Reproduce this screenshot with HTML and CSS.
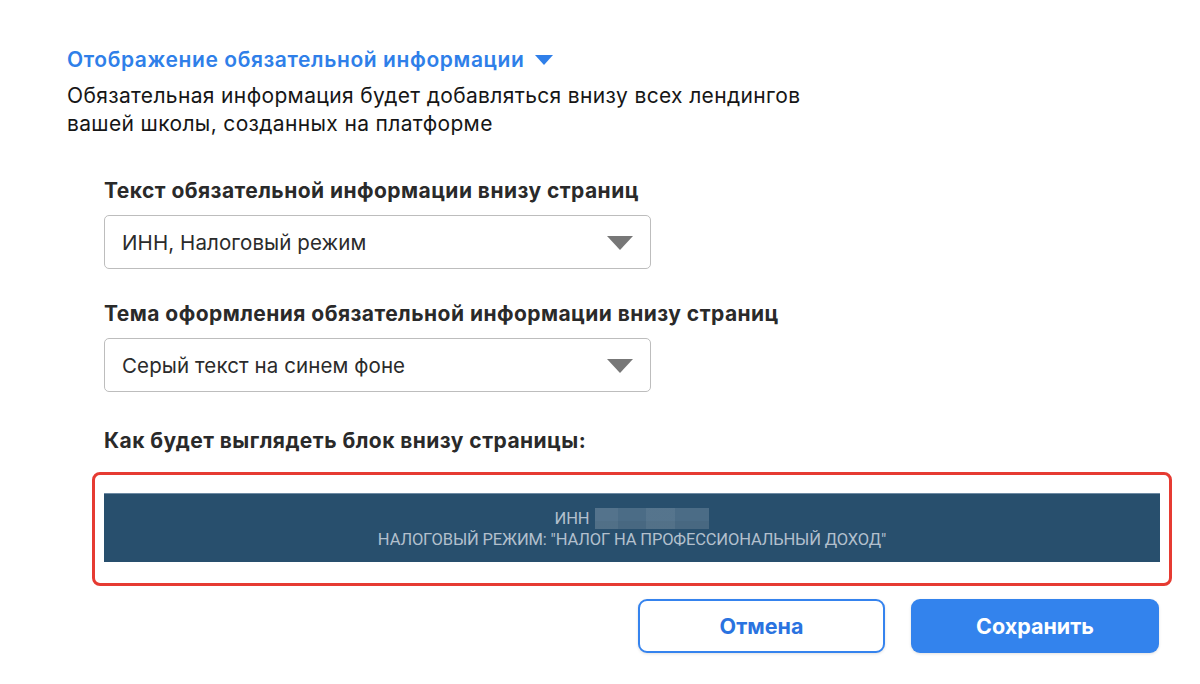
FILE: index.html
```html
<!DOCTYPE html>
<html lang="ru">
<head>
<meta charset="utf-8">
<title>Обязательная информация</title>
<link rel="stylesheet" href="styles.css">
</head>
<body>
<div class="page">
  <div class="head">
    <div class="title">
      <span>Отображение обязательной информации</span>
      <svg class="title-caret" width="18" height="10" viewBox="0 0 18 10"><path d="M0 0 H18 L9 10 Z" fill="#2f7fe9"/></svg>
    </div>
    <p class="desc">Обязательная информация будет добавляться внизу всех лендингов<br>вашей школы, созданных на платформе</p>
  </div>

  <div class="form">
    <div class="field">
      <div class="label">Текст обязательной информации внизу страниц</div>
      <div class="select">
        <span>ИНН, Налоговый режим</span>
        <svg width="26" height="14" viewBox="0 0 26 14"><path d="M0 0 H26 L13 14 Z" fill="#777"/></svg>
      </div>
    </div>
    <div class="field field-2">
      <div class="label">Тема оформления обязательной информации внизу страниц</div>
      <div class="select">
        <span>Серый текст на синем фоне</span>
        <svg width="26" height="14" viewBox="0 0 26 14"><path d="M0 0 H26 L13 14 Z" fill="#777"/></svg>
      </div>
    </div>
    <div class="label label-3">Как будет выглядеть блок внизу страницы:</div>
    <div class="frame">
      <div class="preview">
        <div class="line">ИНН <span class="blur"></span></div>
        <div class="line">НАЛОГОВЫЙ РЕЖИМ: "НАЛОГ НА ПРОФЕССИОНАЛЬНЫЙ ДОХОД"</div>
      </div>
    </div>
    <div class="actions">
      <button class="btn btn-outline">Отмена</button>
      <button class="btn btn-primary">Сохранить</button>
    </div>
  </div>
</div>
</body>
</html>
```

FILE: styles.css
```css
* { box-sizing: border-box; }
html, body { margin: 0; padding: 0; background: #fff; }
body {
  font-family: Inter, "Noto Sans", "Liberation Sans", sans-serif;
  color: #1a1a1a;
  width: 1200px;
  height: 684px;
  overflow: hidden;
}
.page { padding-top: 45px; }
.head { padding-left: 67px; }
.title {
  display: flex;
  align-items: center;
  gap: 11px;
  height: 28px;
  font-size: 21px;
  font-weight: 600;
  color: #2f7fe9;
  letter-spacing: 0.6px;
}
.title-caret { margin-top: 1px; }
.desc {
  margin: 9px 0 0;
  font-size: 21px;
  line-height: 28px;
  color: #161616;
  letter-spacing: 0.35px;
}
.form {
  margin-left: 104px;
  width: 1056px;
  padding-top: 39px;
}
.label {
  font-size: 21px;
  font-weight: 700;
  line-height: 28px;
  color: #2a2a2a;
  letter-spacing: 0.45px;
}
.field .label { margin-bottom: 10px; }
.field-2 { margin-top: 31px; }
.select {
  width: 547px;
  height: 54px;
  border: 1px solid #bdbdbd;
  border-radius: 5px;
  display: flex;
  align-items: center;
  justify-content: space-between;
  padding: 0 17px 0 17px;
  font-size: 20.5px;
  color: #2b2b2b;
  letter-spacing: 0.1px;
}
.select svg { margin-top: 2px; }
.label-3 { margin-top: 35px; }
.frame {
  margin: 17px -12px 0;
  border: 3px solid #e63b32;
  border-radius: 8px;
  padding: 18px 9px 21px;
}
.preview {
  height: 69px;
  background: #284f6d;
  border-top: 1px solid #6d8aa3;
  display: flex;
  flex-direction: column;
  align-items: center;
  justify-content: center;
  font-family: Roboto, "Liberation Sans", sans-serif;
  font-size: 16.5px;
  letter-spacing: -0.15px;
  color: #b3c0cd;
  line-height: 21px;
  padding-top: 1px;
}
.line { display: flex; align-items: center; white-space: pre; }
.blur {
  display: inline-block;
  width: 114px;
  height: 21px;
  margin-left: 2px;
  background:
    linear-gradient(90deg, rgba(255,255,255,0.05) 0 20%, transparent 20% 45%, rgba(255,255,255,0.06) 45% 70%, transparent 70%),
    linear-gradient(180deg, transparent 0 60%, rgba(0,0,0,0.04) 60%),
    #4b6c86;
}
.actions {
  display: flex;
  justify-content: flex-end;
  gap: 26px;
  margin-top: 13px;
  padding-right: 1px;
}
.btn {
  width: 247px;
  height: 54px;
  border-radius: 9px;
  font-family: Inter, "Noto Sans", "Liberation Sans", sans-serif;
  font-size: 21.5px;
  font-weight: 700;
  cursor: pointer;
  box-shadow: 0 1px 3px rgba(0,0,0,0.12);
}
.btn-outline {
  background: #fff;
  border: 2px solid #3583ee;
  color: #2a73e0;
}
.btn-primary {
  background: #3383ed;
  border: none;
  color: #fff;
  width: 248px;
}
```
